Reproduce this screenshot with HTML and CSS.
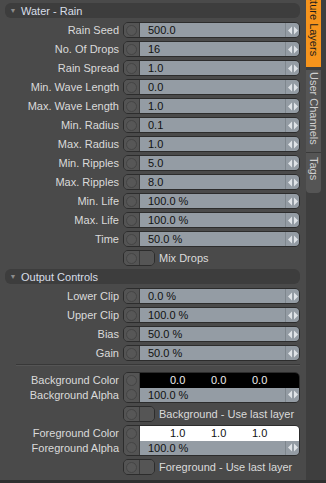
FILE: index.html
```html
<!DOCTYPE html>
<html lang="en">
<head>
    <meta charset="UTF-8">
    <title>Water - Rain</title>
    <link rel="stylesheet" href="styles.css">
</head>
<body>
    <div class="layout">
        <div class="panel">
            <div class="section-head"><span class="arrow">&#9660;</span>Water - Rain</div>

            <div class="row"><span class="lbl">Rain Seed</span><div class="field"><span class="knob"><i></i></span><span class="val">500.0</span><span class="spin"><svg width="10" height="9" viewBox="0 0 10 9"><polygon points="0,4.5 4,0.5 4,8.5"/><polygon points="6,0.5 10,4.5 6,8.5"/></svg></span></div></div>
            <div class="row"><span class="lbl">No. Of Drops</span><div class="field"><span class="knob"><i></i></span><span class="val">16</span><span class="spin"><svg width="10" height="9" viewBox="0 0 10 9"><polygon points="0,4.5 4,0.5 4,8.5"/><polygon points="6,0.5 10,4.5 6,8.5"/></svg></span></div></div>
            <div class="row"><span class="lbl">Rain Spread</span><div class="field"><span class="knob"><i></i></span><span class="val">1.0</span><span class="spin"><svg width="10" height="9" viewBox="0 0 10 9"><polygon points="0,4.5 4,0.5 4,8.5"/><polygon points="6,0.5 10,4.5 6,8.5"/></svg></span></div></div>
            <div class="row"><span class="lbl">Min. Wave Length</span><div class="field"><span class="knob"><i></i></span><span class="val">0.0</span><span class="spin"><svg width="10" height="9" viewBox="0 0 10 9"><polygon points="0,4.5 4,0.5 4,8.5"/><polygon points="6,0.5 10,4.5 6,8.5"/></svg></span></div></div>
            <div class="row"><span class="lbl">Max. Wave Length</span><div class="field"><span class="knob"><i></i></span><span class="val">1.0</span><span class="spin"><svg width="10" height="9" viewBox="0 0 10 9"><polygon points="0,4.5 4,0.5 4,8.5"/><polygon points="6,0.5 10,4.5 6,8.5"/></svg></span></div></div>
            <div class="row"><span class="lbl">Min. Radius</span><div class="field"><span class="knob"><i></i></span><span class="val">0.1</span><span class="spin"><svg width="10" height="9" viewBox="0 0 10 9"><polygon points="0,4.5 4,0.5 4,8.5"/><polygon points="6,0.5 10,4.5 6,8.5"/></svg></span></div></div>
            <div class="row"><span class="lbl">Max. Radius</span><div class="field"><span class="knob"><i></i></span><span class="val">1.0</span><span class="spin"><svg width="10" height="9" viewBox="0 0 10 9"><polygon points="0,4.5 4,0.5 4,8.5"/><polygon points="6,0.5 10,4.5 6,8.5"/></svg></span></div></div>
            <div class="row"><span class="lbl">Min. Ripples</span><div class="field"><span class="knob"><i></i></span><span class="val">5.0</span><span class="spin"><svg width="10" height="9" viewBox="0 0 10 9"><polygon points="0,4.5 4,0.5 4,8.5"/><polygon points="6,0.5 10,4.5 6,8.5"/></svg></span></div></div>
            <div class="row"><span class="lbl">Max. Ripples</span><div class="field"><span class="knob"><i></i></span><span class="val">8.0</span><span class="spin"><svg width="10" height="9" viewBox="0 0 10 9"><polygon points="0,4.5 4,0.5 4,8.5"/><polygon points="6,0.5 10,4.5 6,8.5"/></svg></span></div></div>
            <div class="row"><span class="lbl">Min. Life</span><div class="field"><span class="knob"><i></i></span><span class="val">100.0 %</span><span class="spin"><svg width="10" height="9" viewBox="0 0 10 9"><polygon points="0,4.5 4,0.5 4,8.5"/><polygon points="6,0.5 10,4.5 6,8.5"/></svg></span></div></div>
            <div class="row"><span class="lbl">Max. Life</span><div class="field"><span class="knob"><i></i></span><span class="val">100.0 %</span><span class="spin"><svg width="10" height="9" viewBox="0 0 10 9"><polygon points="0,4.5 4,0.5 4,8.5"/><polygon points="6,0.5 10,4.5 6,8.5"/></svg></span></div></div>
            <div class="row"><span class="lbl">Time</span><div class="field"><span class="knob"><i></i></span><span class="val">50.0 %</span><span class="spin"><svg width="10" height="9" viewBox="0 0 10 9"><polygon points="0,4.5 4,0.5 4,8.5"/><polygon points="6,0.5 10,4.5 6,8.5"/></svg></span></div></div>
            <div class="row"><span class="lbl"></span><div class="toggle"><span class="knob"><i></i></span><span class="off"></span></div><span class="toggle-text">Mix Drops</span></div>

            <div class="section-head"><span class="arrow">&#9660;</span>Output Controls</div>

            <div class="row"><span class="lbl">Lower Clip</span><div class="field"><span class="knob"><i></i></span><span class="val">0.0 %</span><span class="spin"><svg width="10" height="9" viewBox="0 0 10 9"><polygon points="0,4.5 4,0.5 4,8.5"/><polygon points="6,0.5 10,4.5 6,8.5"/></svg></span></div></div>
            <div class="row"><span class="lbl">Upper Clip</span><div class="field"><span class="knob"><i></i></span><span class="val">100.0 %</span><span class="spin"><svg width="10" height="9" viewBox="0 0 10 9"><polygon points="0,4.5 4,0.5 4,8.5"/><polygon points="6,0.5 10,4.5 6,8.5"/></svg></span></div></div>
            <div class="row"><span class="lbl">Bias</span><div class="field"><span class="knob"><i></i></span><span class="val">50.0 %</span><span class="spin"><svg width="10" height="9" viewBox="0 0 10 9"><polygon points="0,4.5 4,0.5 4,8.5"/><polygon points="6,0.5 10,4.5 6,8.5"/></svg></span></div></div>
            <div class="row"><span class="lbl">Gain</span><div class="field"><span class="knob"><i></i></span><span class="val">50.0 %</span><span class="spin"><svg width="10" height="9" viewBox="0 0 10 9"><polygon points="0,4.5 4,0.5 4,8.5"/><polygon points="6,0.5 10,4.5 6,8.5"/></svg></span></div></div>

            <div class="separator"></div>

            <div class="row color-row">
                <div class="lbl-stack"><span>Background Color</span><span>Background Alpha</span></div>
                <div class="field color-field">
                    <div class="sub"><span class="knob"><i></i></span><span class="val rgb bg-black"><span>0.0</span><span>0.0</span><span>0.0</span></span></div>
                    <div class="sub"><span class="knob"><i></i></span><span class="val">100.0 %</span><span class="spin"><svg width="10" height="9" viewBox="0 0 10 9"><polygon points="0,4.5 4,0.5 4,8.5"/><polygon points="6,0.5 10,4.5 6,8.5"/></svg></span></div>
                </div>
            </div>
            <div class="row"><span class="lbl"></span><div class="toggle"><span class="knob"><i></i></span><span class="off"></span></div><span class="toggle-text">Background - Use last layer</span></div>

            <div class="row color-row">
                <div class="lbl-stack"><span>Foreground Color</span><span>Foreground Alpha</span></div>
                <div class="field color-field">
                    <div class="sub"><span class="knob"><i></i></span><span class="val rgb bg-white"><span>1.0</span><span>1.0</span><span>1.0</span></span></div>
                    <div class="sub"><span class="knob"><i></i></span><span class="val">100.0 %</span><span class="spin"><svg width="10" height="9" viewBox="0 0 10 9"><polygon points="0,4.5 4,0.5 4,8.5"/><polygon points="6,0.5 10,4.5 6,8.5"/></svg></span></div>
                </div>
            </div>
            <div class="row"><span class="lbl"></span><div class="toggle"><span class="knob"><i></i></span><span class="off"></span></div><span class="toggle-text">Foreground - Use last layer</span></div>
        </div>

        <div class="tabs">
            <div class="tab active">Texture Layers</div>
            <div class="tab channels">User Channels</div>
            <div class="tab tags">Tags</div>
        </div>
    </div>
</body>
</html>
```

FILE: styles.css
```css
/* Panneau de propriétés - style sombre */
body {
    margin: 0;
    background: #2f2f2f;
    font-family: 'Liberation Sans', Arial, sans-serif;
    font-size: 11px;
    color: #dadada;
    overflow: hidden;
}

.layout {
    display: flex;
    height: 480px;
    background: #4a4a4a;
}

.panel {
    width: 306px;
    padding-top: 3px;
}

.section-head {
    display: flex;
    align-items: center;
    height: 15px;
    margin: 0 6px 4px 5px;
    background: #3d3d3d;
    border-radius: 6px;
    color: #d8dee8;
}

.section-head .arrow {
    font-size: 7px;
    color: #8c8c8c;
    width: 16px;
    text-align: center;
}

.row {
    display: flex;
    align-items: center;
    height: 16px;
    margin-bottom: 3px;
}

.lbl {
    width: 119px;
    margin-right: 4px;
    text-align: right;
    white-space: nowrap;
}

.field {
    display: flex;
    width: 177px;
    height: 16px;
    box-sizing: border-box;
    border: 1px solid #2c2c2c;
    border-radius: 5px;
    overflow: hidden;
}

.knob {
    display: flex;
    align-items: center;
    justify-content: center;
    width: 15px;
    flex: none;
    background: #545454;
    border-right: 1px solid #3a3a3a;
}

.knob i {
    display: block;
    width: 9px;
    height: 9px;
    border-radius: 50%;
    border: 1px solid #454545;
    background: #575757;
}

.val {
    flex: 1;
    display: flex;
    align-items: center;
    padding-left: 8px;
    background: #949ca4;
    color: #111;
    white-space: nowrap;
}

.spin {
    display: flex;
    align-items: center;
    justify-content: center;
    width: 13px;
    flex: none;
    background: #949ca4;
    border-left: 1px solid #7e868d;
}

.spin svg {
    fill: #dfe3e7;
}

.toggle {
    display: flex;
    width: 32px;
    height: 16px;
    box-sizing: border-box;
    border: 1px solid #2c2c2c;
    border-radius: 5px;
    overflow: hidden;
}

.toggle .off {
    flex: 1;
    background: #555;
}

.toggle-text {
    margin-left: 4px;
    white-space: nowrap;
}

.separator {
    height: 1px;
    margin: 2px 6px 6px 16px;
    background: #383838;
    border-bottom: 1px solid #555;
}

.color-row {
    height: 31px;
}

.lbl-stack {
    display: flex;
    flex-direction: column;
    width: 119px;
    margin-right: 4px;
    text-align: right;
    white-space: nowrap;
}

.lbl-stack span {
    height: 15px;
    line-height: 15px;
}

.color-field {
    flex-direction: column;
    height: 31px;
}

.color-field .sub {
    display: flex;
    height: 15px;
}

.color-field .knob {
    border-right: 1px solid #3a3a3a;
}

.rgb {
    padding-left: 30px;
}

.rgb span {
    width: 41px;
}

.bg-black {
    background: #000;
    color: #eee;
}

.bg-white {
    background: #fff;
    color: #111;
}

/* onglets verticaux */
.tabs {
    width: 20px;
    background: #3e3e3e;
    overflow: hidden;
}

.tab {
    width: 15px;
    box-sizing: border-box;
    writing-mode: vertical-rl;
    line-height: 15px;
    white-space: nowrap;
    overflow: hidden;
}

.tab.active {
    margin-top: -20px;
    height: 87px;
    padding-top: 4px;
    background: #f6941c;
    color: #1c1c1c;
}

.tab.channels {
    margin-top: 3px;
    height: 83px;
    padding-top: 2px;
    background: #555;
    color: #cfcfcf;
    border-bottom: 1px solid #3a3a3a;
}

.tab.tags {
    height: 40px;
    padding-top: 4px;
    background: #555;
    color: #cfcfcf;
    border-radius: 0 0 4px 4px;
}
```
